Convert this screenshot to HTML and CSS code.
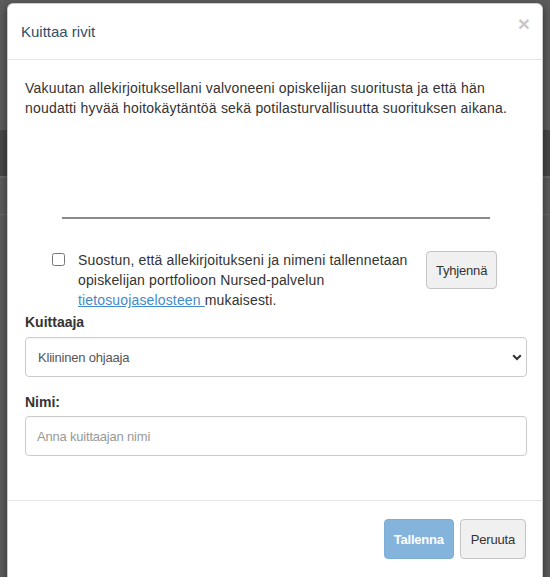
FILE: index.html
```html
<!DOCTYPE html>
<html lang="fi">
<head>
<meta charset="utf-8">
<title>Kuittaa rivit</title>
<link rel="stylesheet" href="styles.css">
</head>
<body>
<div class="page">
  <div class="page-top"></div>
  <div class="page-band"></div>
  <div class="page-row"></div>
</div>
<div class="modal">
  <div class="modal-header">
    <h4 class="modal-title">Kuittaa rivit</h4>
    <span class="close">×</span>
  </div>
  <div class="modal-body">
    <p class="intro">Vakuutan allekirjoituksellani valvoneeni opiskelijan suoritusta ja että hän noudatti hyvää hoitokäytäntöä sekä potilasturvallisuutta suorituksen aikana.</p>
    <div class="signature"></div>
    <div class="consent">
      <input type="checkbox" class="consent-check">
      <div class="consent-text">Suostun, että allekirjoitukseni ja nimeni tallennetaan opiskelijan portfolioon Nursed-palvelun <a href="#">tietosuojaselosteen </a>mukaisesti.</div>
      <button class="btn btn-default btn-clear">Tyhjennä</button>
    </div>
    <label class="lbl lbl-first">Kuittaaja</label>
    <div class="select-wrap">
      <select class="form-control">
        <option>Kliininen ohjaaja</option>
      </select>
      <svg class="chev" width="10" height="7" viewBox="0 0 10 7"><path d="M1.2 1.2 L5 5 L8.8 1.2" fill="none" stroke="#333" stroke-width="2"/></svg>
    </div>
    <label class="lbl lbl-second">Nimi:</label>
    <input type="text" class="form-control" placeholder="Anna kuittaajan nimi">
  </div>
  <div class="modal-footer">
    <button class="btn btn-primary btn-save" disabled>Tallenna</button>
    <button class="btn btn-default btn-cancel">Peruuta</button>
  </div>
</div>
</body>
</html>
```
FILE: styles.css
```css
html, body {
  margin: 0;
  padding: 0;
}
body {
  width: 550px;
  height: 577px;
  overflow: hidden;
  background: #5c5c5c;
  font-family: "Liberation Sans", Arial, sans-serif;
  font-size: 14px;
  line-height: 20px;
  color: #333;
  position: relative;
}
.page-top {
  height: 130px;
}
.page-band {
  height: 46px;
  background: #484848;
  border-bottom: 2px solid #6a6a6a;
}
.page-row {
  height: 36px;
  border-bottom: 1px solid #6a6a6a;
}
.modal {
  position: absolute;
  left: 7px;
  top: 3px;
  width: 536px;
  box-sizing: border-box;
  background: #fff;
  border: 1px solid rgba(0,0,0,0.2);
  border-radius: 6px;
  box-shadow: 0 3px 9px rgba(0,0,0,0.5);
}
.modal-header {
  display: flex;
  justify-content: space-between;
  align-items: flex-start;
  padding: 17px 12px 17px 13px;
  border-bottom: 1px solid #e5e5e5;
}
.modal-title {
  margin: 0;
  font-size: 15px;
  font-weight: normal;
  line-height: 21px;
  color: #2f4f68;
}
.close {
  font-size: 21px;
  font-weight: bold;
  line-height: 21px;
  color: #c8c8c8;
  margin-top: -8px;
}
.modal-body {
  padding: 18px 15px 44px 17px;
}
.intro {
  margin: 0;
  letter-spacing: 0.2px;
}
.signature {
  width: 428px;
  height: 99px;
  margin: 0 auto;
  border-bottom: 2px solid #8a8a8a;
}
.consent {
  display: flex;
  align-items: flex-start;
  margin-top: 31px;
}
.consent-check {
  width: 13px;
  height: 13px;
  margin: 3px 0 0 27px;
}
.consent-text {
  width: 340px;
  margin-left: 13px;
  letter-spacing: 0.15px;
}
.consent-text a {
  color: #428bca;
  text-decoration: underline;
}
.btn {
  font-family: "Liberation Sans", Arial, sans-serif;
  font-size: 13px;
  letter-spacing: -0.2px;
  height: 40px;
  padding: 0 7px;
  border-radius: 4px;
  border: 1px solid #c4c4c4;
  background: #f0f0f0;
  color: #333;
}
.btn-clear {
  height: 38px;
  margin: 1px 0 0 8px;
  padding: 0 9px;
}
.btn-save {
  padding: 0 9px;
}
.btn-cancel {
  padding: 0 10px;
}
.btn-primary {
  background: #84b3dc;
  border-color: #7eaed8;
  color: #fff;
  font-weight: bold;
}
.lbl {
  display: block;
  font-weight: bold;
}
.lbl-first {
  margin-top: 2px;
  margin-bottom: 5px;
}
.lbl-second {
  margin-top: 15px;
  margin-bottom: 4px;
}
.select-wrap {
  position: relative;
}
.form-control {
  display: block;
  width: 100%;
  height: 40px;
  box-sizing: border-box;
  border: 1px solid #ccc;
  border-radius: 4px;
  background: #fff;
  font-family: "Liberation Sans", Arial, sans-serif;
  font-size: 13px;
  letter-spacing: -0.2px;
  color: #555;
  padding: 0 12px;
  margin: 0;
  box-shadow: inset 0 1px 1px rgba(0,0,0,0.04);
}
select.form-control {
  appearance: none;
  -webkit-appearance: none;
}
input.form-control {
  padding-left: 11px;
}
input.form-control::placeholder {
  color: #999;
}
.chev {
  position: absolute;
  right: 5px;
  top: 17px;
}
.modal-footer {
  display: flex;
  justify-content: flex-end;
  gap: 6px;
  padding: 18px 16px 30px;
  border-top: 1px solid #e5e5e5;
}
```
